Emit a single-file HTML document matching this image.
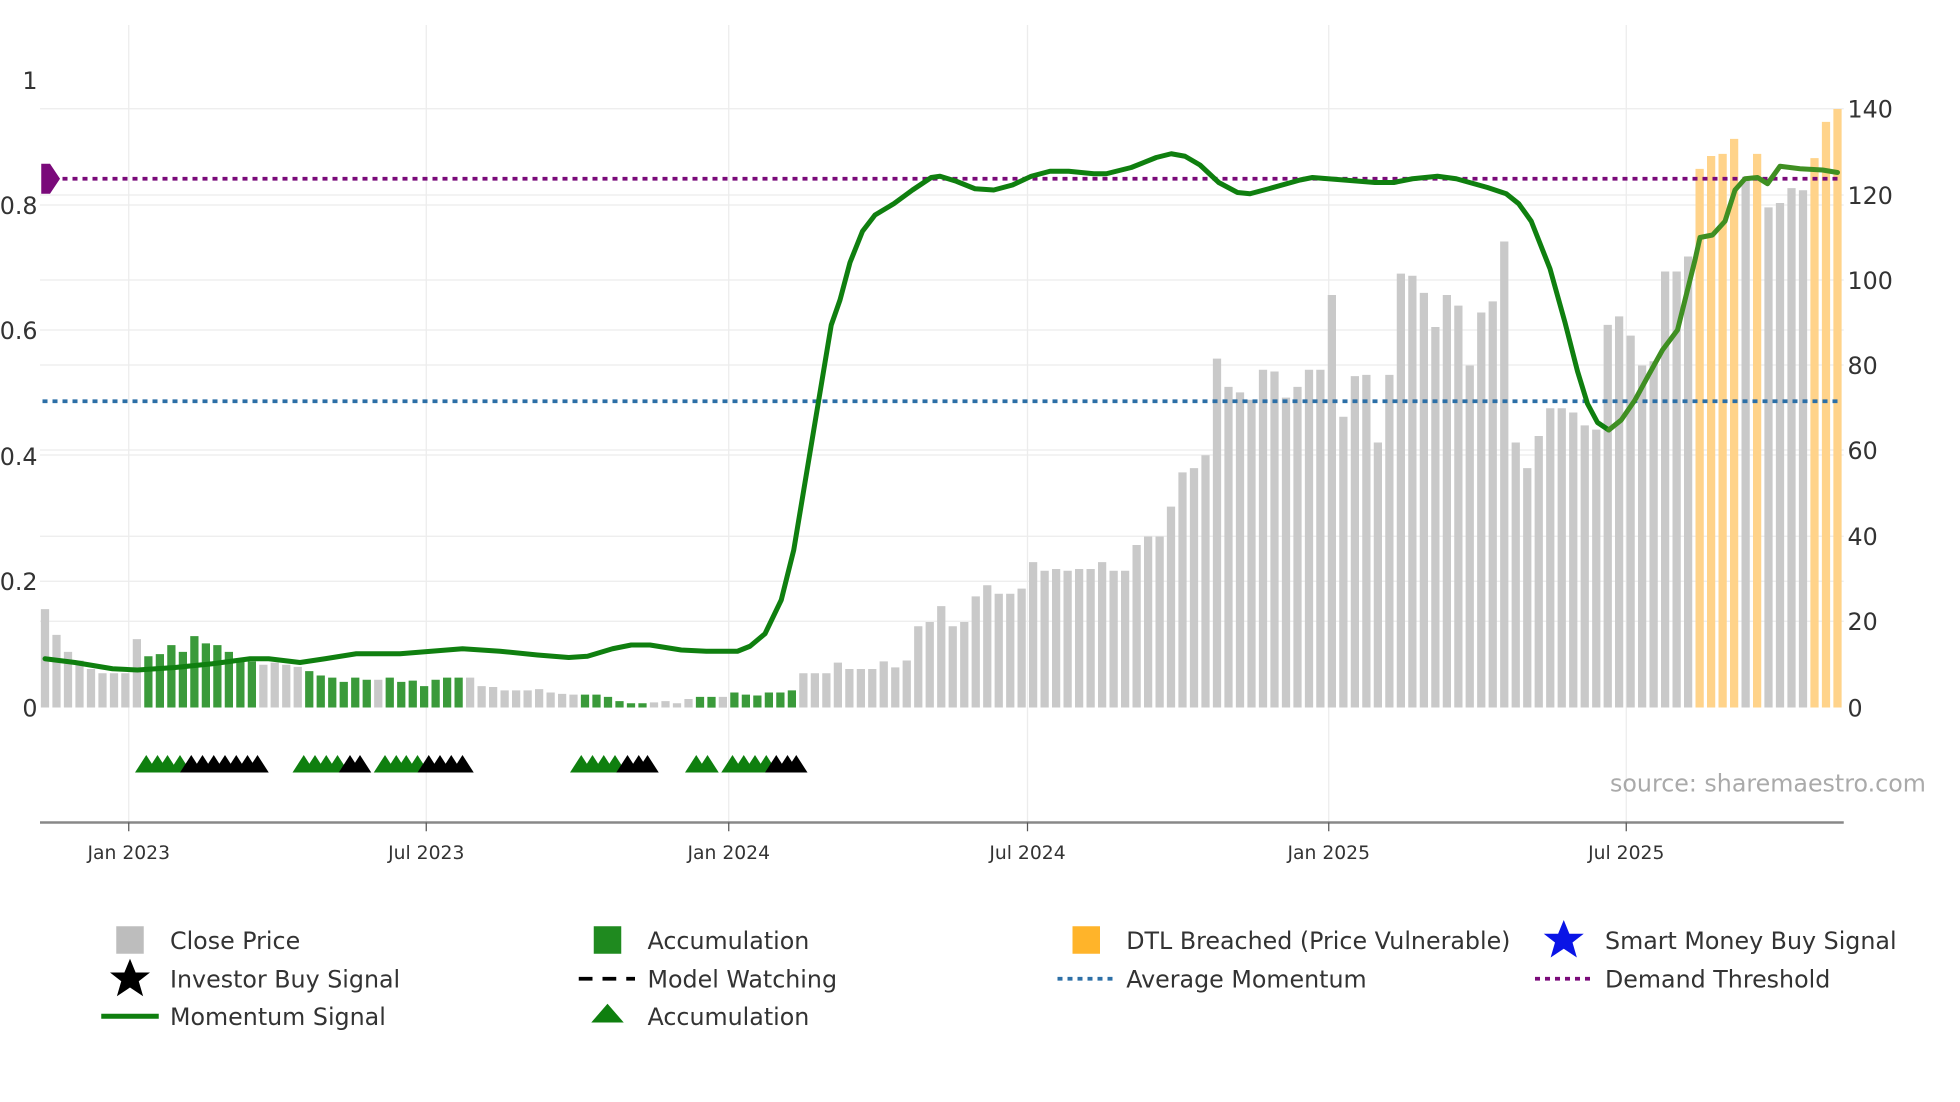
<!DOCTYPE html>
<html><head><meta charset="utf-8"><style>
html,body{margin:0;padding:0;background:#fff;}
svg{display:block;font-family:"DejaVu Sans","Liberation Sans",sans-serif;}
</style></head><body>
<svg id="c" width="1960" height="1102" viewBox="0 0 1568 881.6" preserveAspectRatio="none" xmlns="http://www.w3.org/2000/svg">
<g stroke="#ececec" stroke-width="1">
<line x1="32" x2="1475" y1="87" y2="87"/><line x1="32" x2="1475" y1="156" y2="156"/><line x1="32" x2="1475" y1="224" y2="224"/><line x1="32" x2="1475" y1="292" y2="292"/><line x1="32" x2="1475" y1="360" y2="360"/><line x1="32" x2="1475" y1="429" y2="429"/><line x1="32" x2="1475" y1="497" y2="497"/>
<line x1="32" x2="1475" y1="164" y2="164"/><line x1="32" x2="1475" y1="264" y2="264"/><line x1="32" x2="1475" y1="364" y2="364"/><line x1="32" x2="1475" y1="465" y2="465"/>
<line x1="103" x2="103" y1="20" y2="658"/><line x1="341" x2="341" y1="20" y2="658"/><line x1="583" x2="583" y1="20" y2="658"/><line x1="822" x2="822" y1="20" y2="658"/><line x1="1063" x2="1063" y1="20" y2="658"/><line x1="1301" x2="1301" y1="20" y2="658"/>
</g>
<g id="bars"></g>
<line x1="34" x2="1473" y1="321" y2="321" stroke="#2c6fa6" stroke-width="3" stroke-dasharray="4 4"/>
<line x1="34" x2="1473" y1="143" y2="143" stroke="#7a0a7a" stroke-width="3" stroke-dasharray="4 4"/>
<path d="M33 131 L40 131 L48 143 L40 155 L33 155 Z" fill="#7a0a7a"/>
<g id="line"></g>
<g id="tri"></g>
<line x1="32" x2="1475" y1="658" y2="658" stroke="#888" stroke-width="2"/>
<g stroke="#555" stroke-width="1"><line x1="103" x2="103" y1="658" y2="665"/><line x1="341" x2="341" y1="658" y2="665"/><line x1="583" x2="583" y1="658" y2="665"/><line x1="822" x2="822" y1="658" y2="665"/><line x1="1063" x2="1063" y1="658" y2="665"/><line x1="1301" x2="1301" y1="658" y2="665"/></g>
<g font-size="15" fill="#333" text-anchor="middle">
<text x="103" y="687">Jan 2023</text><text x="341" y="687">Jul 2023</text><text x="583" y="687">Jan 2024</text><text x="822" y="687">Jul 2024</text><text x="1063" y="687">Jan 2025</text><text x="1301" y="687">Jul 2025</text>
</g>
<g font-size="19" fill="#333" text-anchor="end">
<text x="30" y="71">1</text><text x="30" y="171">0.8</text><text x="30" y="271">0.6</text><text x="30" y="372">0.4</text><text x="30" y="472">0.2</text><text x="30" y="573">0</text>
</g>
<g font-size="19" fill="#333">
<text x="1478" y="94">140</text><text x="1478" y="163">120</text><text x="1478" y="231">100</text><text x="1478" y="299">80</text><text x="1478" y="367">60</text><text x="1478" y="436">40</text><text x="1478" y="504">20</text><text x="1478" y="573">0</text>
</g>
<text x="1288" y="633" font-size="19" fill="#aaa">source: sharemaestro.com</text>
<g font-size="19" fill="#333">
<rect x="93" y="741" width="22" height="22" fill="#bdbdbd"/><text x="136" y="759">Close Price</text>
<rect x="475" y="741" width="22" height="22" fill="#1f8a1f"/><text x="518" y="759">Accumulation</text>
<rect x="858" y="741" width="22" height="22" fill="#ffb42a"/><text x="901" y="759">DTL Breached (Price Vulnerable)</text>
<polygon points="1251,736 1255.5,747 1267,747 1258,754 1261.5,766 1251,759 1240.5,766 1244,754 1235,747 1246.5,747" fill="#0a14e6"/><text x="1284" y="759">Smart Money Buy Signal</text>
<polygon points="104,767 108.5,778 120,778 111,785 114.5,797 104,790 93.5,797 97,785 88,778 99.5,778" fill="#000"/><text x="136" y="790">Investor Buy Signal</text>
<line x1="463" x2="508" y1="783" y2="783" stroke="#000" stroke-width="3" stroke-dasharray="11 8"/><text x="518" y="790">Model Watching</text>
<line x1="846" x2="891" y1="783" y2="783" stroke="#2c6fa6" stroke-width="3" stroke-dasharray="4 4"/><text x="901" y="790">Average Momentum</text>
<line x1="1228" x2="1273" y1="783" y2="783" stroke="#7a0a7a" stroke-width="3" stroke-dasharray="4 4"/><text x="1284" y="790">Demand Threshold</text>
<line x1="81" x2="127" y1="813" y2="813" stroke="#0f7f0f" stroke-width="4"/><text x="136" y="820">Momentum Signal</text>
<polygon points="486,803 499,818 473,818" fill="#0f7f0f"/><text x="518" y="820">Accumulation</text>
</g>
</svg>
<script>
var NS="http://www.w3.org/2000/svg";
function el(t,a,p){var e=document.createElementNS(NS,t);for(var k in a)e.setAttribute(k,a[k]);p.appendChild(e);return e;}
var G='g',R='r',O='o';
var early=[[23,G],[17,G],[13,G],[11,G],[9,G],[8,G],[8,G],[8,G],[16,G],
[12,R],[12.5,R],[14.6,R],[13,R],[16.7,R],[15,R],[14.6,R],[13,R],[11.4,R],[10.8,R],
[10,G],[10.5,G],[10,G],[9.5,G],
[8.5,R],[7.5,R],[7,R],[6,R],[7,R],[6.5,R],[6.5,G],[7,R],[6,R],[6.3,R],[5,R],[6.5,R],[7,R],[7,R],
[7,G],[5,G],[4.8,G],[4,G],[4,G],[4,G],[4.3,G],[3.5,G],[3.2,G],[3,G],
[3,R],[3,R],[2.5,R],[1.5,R],
[1,R],[1,R],[1.2,G],[1.5,G],[1,G],[2,G],
[2.5,R],[2.5,R],[2.5,G],[3.5,R],[3,R],[2.8,R],[3.5,R],[3.5,R],[4,R]];
var late=[8,8,8,10.5,9,9,9,10.8,9.4,11,19,20,23.7,19,20,26,28.6,26.6,26.6,27.8,34,32,32.4,32,32.4,32.4,34,32,32,38,40,40,47,55,56,59,81.6,75,73.7,72,79,78.6,72.5,75,79,79,96.5,68,77.5,77.8,62,77.8,101.5,101,97,89,96.5,94,80,92.4,95,109,62,56,63.5,70,70,69,66,65,89.5,91.5,87,80,81,102,102,105.5];
var all=early.slice();late.forEach(function(v){all.push([v,G]);});
[[126,O],[129,O],[129.5,O],[133,O],[123.5,G],[129.5,O],[117,G],[118,G],[121.5,G],[121,G],[128.5,O],[137,O],[140,O]].forEach(function(a){all.push(a);});
var bars=document.getElementById('bars');var n=all.length,step=(1470-36)/(n-1);
var col={g:'#c9c9c9',r:'#3a9a3a',o:'#ffd38a'};
all.forEach(function(b,i){var x=36+i*step,h=b[0]*3.42;el('rect',{x:(x-3.3).toFixed(1),y:(566-h).toFixed(1),width:6.6,height:h.toFixed(1),fill:col[b[1]]},bars);});
var pts=[[36,527],[60,530],[90,535],[110,536],[140,534],[170,531],[200,527],[215,527],[240,530],[260,527],[285,523],[320,523],[370,519],[400,521],[430,524],[455,526],[470,525],[490,519],[505,516],[520,516],[545,520],[565,521],[590,521],[600,517],[612,507],[625,480],[635,440],[645,380],[655,320],[665,260],[672,240],[680,210],[690,185],[700,172],[715,163],[730,152],[745,142],[752,141],[765,145],[780,151],[795,152],[810,148],[825,141],[840,137],[855,137],[875,139],[885,139],[905,134],[925,126],[937,123],[948,125],[960,132],[975,146],[990,154],[1000,155],[1015,151],[1040,144],[1050,142],[1075,144],[1100,146],[1115,146],[1130,143],[1150,141],[1165,143],[1190,150],[1205,155],[1215,163],[1225,177],[1240,215],[1252,258],[1262,297],[1270,323],[1278,338],[1287,344]];
var pts2=[[1287,344],[1297,336],[1308,320],[1320,298],[1330,280],[1342,264],[1350,232],[1356,208],[1360,190],[1370,188],[1380,177],[1388,152],[1396,143],[1406,142],[1414,147],[1424,133],[1440,135],[1458,136],[1470,138]];
var L=document.getElementById('line');
function pl(p,c){el('polyline',{points:p.map(function(q){return q.join(',')}).join(' '),fill:'none',stroke:c,'stroke-width':4,'stroke-linejoin':'round','stroke-linecap':'round'},L);}
pl(pts,'#0f7f0f');pl(pts2,'#3f8f22');
var T=document.getElementById('tri');
function tri(x,c){el('polygon',{points:(x-9)+',618 '+x+',604 '+(x+9)+',618',fill:c},T);}
[117,126,134,144].forEach(function(x){tri(x,'#0f7f0f')});[153,162,171,180,189,198,206].forEach(function(x){tri(x,'#000')});
[243,252,261,270].forEach(function(x){tri(x,'#0f7f0f')});[280,288].forEach(function(x){tri(x,'#000')});
[308,317,325,334].forEach(function(x){tri(x,'#0f7f0f')});[343,352,361,370].forEach(function(x){tri(x,'#000')});
[465,474,483,492].forEach(function(x){tri(x,'#0f7f0f')});[502,511,518].forEach(function(x){tri(x,'#000')});
[557,566].forEach(function(x){tri(x,'#0f7f0f')});[586,595,604,613].forEach(function(x){tri(x,'#0f7f0f')});[621,630,637].forEach(function(x){tri(x,'#000')});
</script>
</body></html>
